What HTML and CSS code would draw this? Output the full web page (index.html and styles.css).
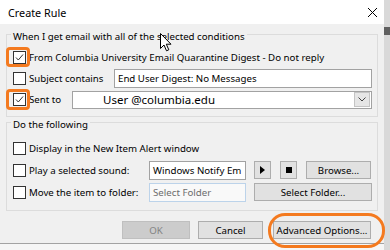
FILE: index.html
```html
<!DOCTYPE html>
<html lang="en">
<head>
    <meta charset="UTF-8">
    <title>Create Rule</title>
    <link rel="stylesheet" href="styles.css">
</head>
<body>
    <div class="screen">
        <div class="dialog">
            <div class="titlebar">
                <span class="title">Create Rule</span>
                <svg class="close" viewBox="0 0 9 9"><path d="M0 0L9 9M9 0L0 9" stroke="#000" stroke-width="1"/></svg>
            </div>
            <div class="content">
                <div class="group group-when">
                    <div class="legend">When I get email with all of the selected conditions</div>
                    <div class="rows">
                        <div class="row">
                            <span class="check on"><svg viewBox="0 0 11 11"><path d="M2 5.5L4.3 8L9 2.5" fill="none" stroke="#333" stroke-width="1"/></svg></span>
                            <span class="text">From Columbia University Email Quarantine Digest - Do not reply</span>
                        </div>
                        <div class="row">
                            <span class="check"></span>
                            <span class="label lbl-subject">Subject contains</span>
                            <div class="textbox wide">End User Digest: No Messages</div>
                        </div>
                        <div class="row">
                            <span class="check on"><svg viewBox="0 0 11 11"><path d="M2 5.5L4.3 8L9 2.5" fill="none" stroke="#333" stroke-width="1"/></svg></span>
                            <span class="label lbl-sent">Sent to</span>
                            <div class="combo">
                                <span class="combo-text">User @columbia.edu</span>
                                <span class="combo-btn"><svg viewBox="0 0 8 5"><path d="M0.5 0.5L4 4L7.5 0.5" fill="none" stroke="#444" stroke-width="1"/></svg></span>
                            </div>
                        </div>
                    </div>
                </div>
                <div class="group group-do">
                    <div class="legend">Do the following</div>
                    <div class="rows">
                        <div class="row">
                            <span class="check"></span>
                            <span class="text">Display in the New Item Alert window</span>
                        </div>
                        <div class="row">
                            <span class="check"></span>
                            <span class="label lbl-action">Play a selected sound:</span>
                            <div class="textbox short">Windows Notify Em</div>
                            <span class="btn btn-icon btn-play"><svg viewBox="0 0 5 8"><path d="M0 0L5 4L0 8Z" fill="#000"/></svg></span>
                            <span class="btn btn-icon btn-stop"><svg viewBox="0 0 6 6"><rect width="6" height="6" fill="#000"/></svg></span>
                            <span class="btn btn-browse">Browse...</span>
                        </div>
                        <div class="row">
                            <span class="check"></span>
                            <span class="label lbl-action">Move the item to folder:</span>
                            <div class="textbox short disabled">Select Folder</div>
                            <span class="btn btn-folder">Select Folder...</span>
                        </div>
                    </div>
                </div>
                <div class="actions">
                    <span class="btn btn-ok">OK</span>
                    <span class="btn btn-cancel">Cancel</span>
                    <span class="btn btn-advanced">Advanced Options...</span>
                </div>
            </div>
        </div>
        <div class="scrollbar"><div class="thumb"></div></div>

        <span class="mark mark-from"></span>
        <span class="mark mark-sent"></span>
        <span class="mark mark-advanced"></span>
        <svg class="cursor" viewBox="0 0 12 19"><path d="M0.5 0.5L0.5 15.5L4 12L6.5 17.8L8.8 16.8L6.3 11.2L11 11.2Z" fill="#fff" stroke="#000" stroke-width="1"/></svg>
    </div>
</body>
</html>
```

FILE: styles.css
```css
*{
    margin: 0;
    padding: 0;
    box-sizing: border-box;
}
body{
    width: 390px;
    height: 250px;
    overflow: hidden;
    background: #f6f6f6;
    font-family: "Noto Sans", "Open Sans", sans-serif;
    font-size: 9.7px;
    color: #000;
}
.screen{
    position: relative;
    display: flex;
    height: 250px;
}
.dialog{
    width: 384px;
    height: 244px;
    background: #f0f0f0;
    border-bottom: 1px solid #a3a3a3;
    display: flex;
    flex-direction: column;
}
.titlebar{
    height: 24px;
    flex: none;
    background: #fff;
    display: flex;
    align-items: center;
    justify-content: space-between;
    padding: 0 7px 0 8px;
}
.title{
    font-size: 10.8px;
}
.close{
    width: 9px;
    height: 9px;
}
.content{
    padding: 0 6px;
}
.group{
    border: 1px solid #dcdcdc;
    margin-top: 10px;
    padding: 0 5px 6px 6px;
}
.group-do{
    margin-top: 5px;
    padding-bottom: 7px;
}
.legend{
    width: fit-content;
    height: 16px;
    line-height: 16px;
    margin: -6px 0 0 -2px;
    padding: 0 2px;
    background: #f0f0f0;
}
.group-when .rows{
    margin-top: 2px;
}
.group-do .rows{
    margin-top: 4px;
}
.row{
    display: flex;
    align-items: center;
    height: 21px;
}
.group-do .row{
    height: 22px;
}
.check{
    flex: none;
    width: 13px;
    height: 13px;
    margin-right: 3px;
    border: 1px solid #333;
    background: #fff;
    display: flex;
    align-items: center;
    justify-content: center;
}
.check svg{
    width: 11px;
    height: 11px;
}
.label{
    flex: none;
    white-space: nowrap;
}
.lbl-subject{
    width: 85px;
}
.lbl-sent{
    width: 43px;
}
.lbl-action{
    width: 120px;
}
.text{
    white-space: nowrap;
}
.textbox{
    height: 19px;
    line-height: 17px;
    border: 1px solid #a2a2a2;
    background: #fff;
    padding-left: 3px;
    white-space: nowrap;
    overflow: hidden;
}
.textbox.wide{
    flex: 1;
}
.textbox.short{
    width: 97px;
    height: 19px;
    margin-right: 8px;
}
.textbox.disabled{
    border-color: #bcd3ea;
    background: #f9f9f9;
    color: #6d6d6d;
}
.combo{
    flex: 1;
    height: 18px;
    border: 1px solid #a2a2a2;
    background: #fff;
    display: flex;
    align-items: center;
    justify-content: space-between;
    padding: 0 1px 0 30px;
}
.combo-text{
    font-size: 11.5px;
}
.combo-btn{
    width: 16px;
    height: 15px;
    background: #e6e6e6;
    border: 1px solid #c4c4c4;
    display: flex;
    align-items: center;
    justify-content: center;
}
.combo-btn svg{
    width: 8px;
    height: 5px;
}
.btn{
    flex: none;
    height: 18px;
    border: 1px solid #adadad;
    background: #e1e1e1;
    display: flex;
    align-items: center;
    justify-content: center;
    white-space: nowrap;
}
.btn-icon{
    width: 17px;
    margin-right: 9px;
}
.btn-play svg{
    width: 5px;
    height: 8px;
}
.btn-stop svg{
    width: 6px;
    height: 6px;
}
.btn-browse{
    width: 65px;
}
.btn-folder{
    width: 118px;
}
.actions{
    display: flex;
    justify-content: flex-end;
    gap: 8px;
    margin-top: 10px;
    padding-right: 7px;
}
.btn-ok{
    width: 68px;
    background: #cccccc;
    border-color: #bfbfbf;
    color: #838383;
}
.btn-cancel{
    width: 65px;
}
.btn-advanced{
    width: 98px;
    margin-left: 2px;
}
.scrollbar{
    width: 6px;
    height: 250px;
    background: #d9d9d9;
    padding-top: 27px;
}
.thumb{
    height: 8px;
    background: #606060;
}
.mark{
    position: absolute;
    border: 3px solid #f47a1f;
    border-radius: 4px;
}
.mark-from{
    left: 6px;
    top: 47px;
    width: 24px;
    height: 20px;
}
.mark-sent{
    left: 6px;
    top: 89px;
    width: 24px;
    height: 21px;
}
.mark-advanced{
    left: 268px;
    top: 213px;
    width: 117px;
    height: 35px;
    border-radius: 17px;
}
.cursor{
    position: absolute;
    left: 160px;
    top: 33px;
    width: 12px;
    height: 19px;
}
```
